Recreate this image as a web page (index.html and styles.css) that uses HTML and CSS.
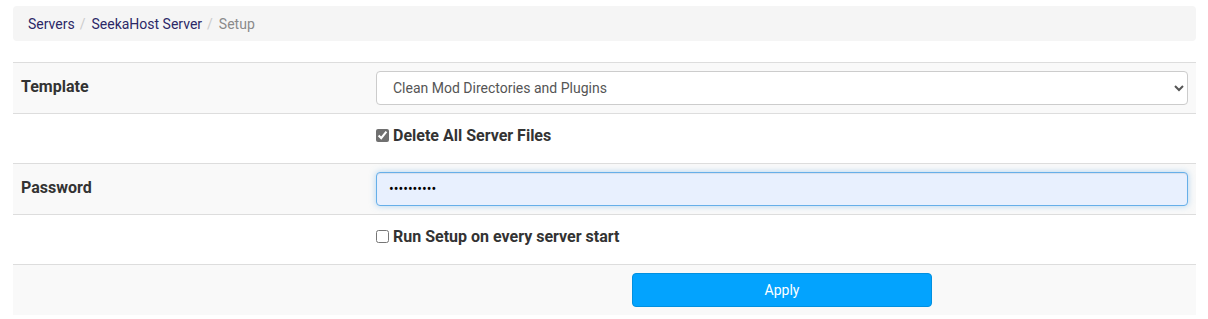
FILE: index.html
```html
<!DOCTYPE html>
<html>
<head>
<meta charset="utf-8">
<title>Setup - SeekaHost Server</title>
<link rel="stylesheet" href="styles.css">
</head>
<body>

<ol class="breadcrumb">
  <li><a href="#">Servers</a></li>
  <li><a href="#">SeekaHost Server</a></li>
  <li class="active">Setup</li>
</ol>

<!-- setup form -->
<form>
<table class="setup">
  <tr class="odd">
    <td class="label"><span>Template</span></td>
    <td>
      <select class="field">
        <option>Clean Mod Directories and Plugins</option>
      </select>
    </td>
  </tr>
  <tr class="plain">
    <td></td>
    <td><label class="check"><input type="checkbox" class="grey" checked> Delete All Server Files</label></td>
  </tr>
  <tr class="odd">
    <td class="label"><span>Password</span></td>
    <td><input class="field autofill" type="password" value="0123456789"></td>
  </tr>
  <tr class="plain">
    <td></td>
    <td><label class="check"><input type="checkbox"> Run Setup on every server start</label></td>
  </tr>
  <tr class="odd">
    <td></td>
    <td class="center"><button type="button" class="btn">Apply</button></td>
  </tr>
</table>
</form>

</body>
</html>
```

FILE: styles.css
```css
body { margin: 6px 12px 8px 13px; font-family: Roboto, "Liberation Sans", sans-serif; font-size: 14px; color: #333; background: #fff; }
.breadcrumb { list-style: none; margin: 0 0 21px 0; padding: 0 15px; height: 35px; display: flex; align-items: center; background: #f5f5f5; border-radius: 4px; }
.breadcrumb li + li::before { content: "/"; color: #ccc; padding: 0 6px 0 5px; }
.breadcrumb a { color: #2c2867; text-decoration: none; }
.breadcrumb .active { color: #8a8a8a; }
.setup { width: 100%; border-collapse: collapse; }
.setup td { border-top: 1px solid #ddd; padding: 8px; height: 34px; vertical-align: middle; }
.setup tr.plain td { height: 33px; }
.setup tr.odd td { background: #f9f9f9; }
.setup td.label { width: 339px; font-weight: bold; font-size: 16px; }
.setup td.label span { display: block; margin-bottom: 4px; }
.field { box-sizing: border-box; width: 100%; height: 34px; padding: 6px 12px; font-family: Roboto, "Liberation Sans", sans-serif; font-size: 14px; color: #555; background: #fff; border: 1px solid #ccc; border-radius: 4px; }
.field.autofill { background: #e8f0fe; border-color: #66afe9; box-shadow: inset 0 1px 1px rgba(0,0,0,.075), 0 0 6px rgba(102,175,233,.5); color: #000; }
.check { font-weight: bold; font-size: 16px; display: flex; align-items: center; gap: 4px; margin-bottom: 6px; }
.check input { margin: 0; width: 13px; height: 13px; }
.check input.grey { accent-color: #707070; }
.center { text-align: center; }
.btn { width: 300px; height: 34px; font-family: Roboto, "Liberation Sans", sans-serif; font-size: 14px; color: #fff; background: #03a3fe; border: 1px solid #0190e0; border-radius: 4px; }
```
